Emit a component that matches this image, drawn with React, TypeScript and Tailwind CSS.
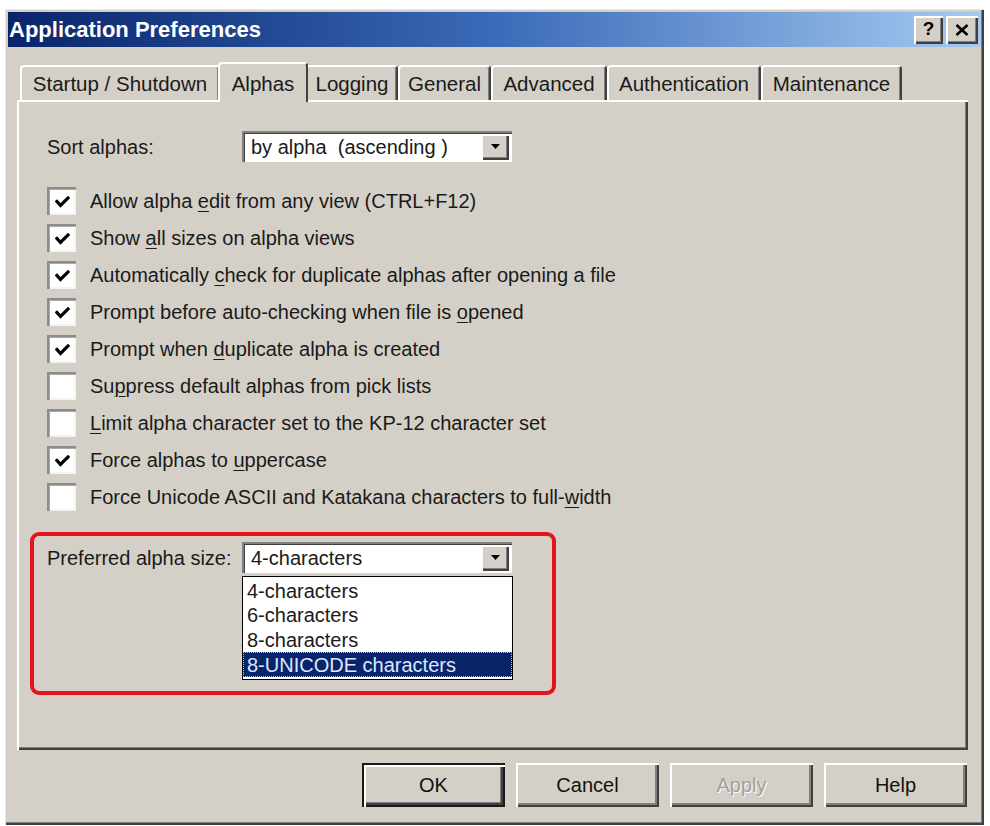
import React from "react";

const FONT = { fontFamily: '"Liberation Sans", Arial, sans-serif' };

function Check() {
  return (
    <svg width="15" height="12" viewBox="0 0 15 12">
      <path d="M2 5.5 L5.5 9.5 L13 2" stroke="#000" strokeWidth="3.2" fill="none" strokeLinecap="square" />
    </svg>
  );
}

function CheckBox({ checked }: { checked: boolean }) {
  return (
    <div className="w-[29px] h-[28px] bg-white shrink-0 flex items-center justify-center pl-[2px] pt-[2px] shadow-[inset_2px_2px_#8c8c8c,inset_3px_3px_#a8a8a8,inset_-2px_-2px_#f4f4f4]">
      {checked ? <Check /> : null}
    </div>
  );
}

function Row({ checked, children }: { checked: boolean; children: React.ReactNode }) {
  return (
    <div className="h-[37px] flex items-center gap-[14px]">
      <CheckBox checked={checked} />
      <span className="whitespace-nowrap">{children}</span>
    </div>
  );
}

function U({ children }: { children: React.ReactNode }) {
  return <span className="underline decoration-1 underline-offset-[3px]">{children}</span>;
}

function Arrow() {
  return (
    <svg width="9" height="5" viewBox="0 0 9 5">
      <path d="M0 0 H9 L4.5 5 Z" fill="#000" />
    </svg>
  );
}

function Combo({ text, width }: { text: string; width: string }) {
  return (
    <div className={`${width} h-[31px] bg-white flex items-center shadow-[inset_2px_2px_#808080,inset_3px_3px_#404040,inset_-2px_-2px_#fff] pl-[9px] pr-[3px]`}>
      <span className="flex-1 whitespace-pre">{text}</span>
      <div className="w-[28px] h-[26px] bg-[#d4d0c8] flex items-center justify-center shadow-[inset_2px_2px_#fff,inset_-2px_-2px_#404040,inset_-3px_-3px_#808080]">
        <Arrow />
      </div>
    </div>
  );
}

function Tab({ label, w, active }: { label: string; w: string; active?: boolean }) {
  if (active) {
    return (
      <div className={`${w} -mx-[2px] relative z-10 h-[40px] -mb-[2px] bg-[#d4d0c8] rounded-t-[4px] border-t-2 border-l-2 border-white border-r-2 border-r-[#404040] flex items-start justify-center pt-[5px]`}>
        {label}
      </div>
    );
  }
  return (
    <div className={`${w} h-[35px] bg-[#d4d0c8] rounded-t-[4px] border-t-2 border-l-2 border-white border-r-2 border-r-[#404040] shadow-[inset_-1px_0_#808080] flex items-center justify-center pt-[2px]`}>
      {label}
    </div>
  );
}

function Btn({ label, def, disabled }: { label: string; def?: boolean; disabled?: boolean }) {
  const base = def
    ? "shadow-[inset_2px_2px_#1a1a1a,inset_4px_4px_#fff,inset_-2px_-2px_#1a1a1a,inset_-4px_-4px_#404040,inset_-5px_-5px_#808080]"
    : "shadow-[inset_2px_2px_#fff,inset_-2px_-2px_#404040,inset_-4px_-4px_#808080]";
  return (
    <div
      className={`w-[143px] h-[44px] bg-[#d4d0c8] flex items-center justify-center ${base} ${
        disabled ? "text-[#a0a0a0] [text-shadow:1px_1px_0_#fff]" : "text-[#111]"
      }`}
    >
      {label}
    </div>
  );
}

export default function App() {
  return (
    <div className="w-[990px] h-[826px] bg-white pt-[9px] pl-[5px] text-[20px] text-[#1a1a1a]" style={FONT}>
      <div className="w-[979px] h-[816px] bg-[#d4d0c8] p-[3px] flex flex-col shadow-[inset_1px_1px_#e8e8e8,inset_-2px_-2px_#404040,inset_-3px_-3px_#808080]">
        {/* Title bar */}
        <div className="h-[35px] shrink-0 bg-linear-to-r from-[#0a246a] via-[#3a6ab8] to-[#a6caf0] flex items-center pl-[1px] pr-[3px]">
          <span className="text-white font-bold text-[22px] flex-1 leading-none">Application Preferences</span>
          <div className="flex gap-[3px]">
            <div className="w-[29px] h-[28px] bg-[#d4d0c8] flex items-center justify-center font-bold text-[19px] text-black shadow-[inset_2px_2px_#fff,inset_-2px_-2px_#404040,inset_-3px_-3px_#808080] pb-[1px]">
              ?
            </div>
            <div className="w-[32px] h-[28px] bg-[#d4d0c8] flex items-center justify-center shadow-[inset_2px_2px_#fff,inset_-2px_-2px_#404040,inset_-3px_-3px_#808080]">
              <svg width="14" height="12" viewBox="0 0 14 12">
                <path d="M1.5 1 L12.5 11 M12.5 1 L1.5 11" stroke="#000" strokeWidth="2.6" />
              </svg>
            </div>
          </div>
        </div>

        {/* Body */}
        <div className="flex flex-col pl-[9px] pr-[13px]">
          {/* Tabs */}
          <div className="mt-[15px] h-[38px] flex items-end pl-[3px] text-[20.5px]">
            <Tab label="Startup / Shutdown" w="w-[200px]" />
            <Tab label="Alphas" w="w-[90px]" active />
            <Tab label="Logging" w="w-[92px]" />
            <Tab label="General" w="w-[93px]" />
            <Tab label="Advanced" w="w-[116px]" />
            <Tab label="Authentication" w="w-[154px]" />
            <Tab label="Maintenance" w="w-[141px]" />
          </div>

          {/* Panel */}
          <div className="h-[650px] flex flex-col pl-[30px] pt-[31px] shadow-[inset_2px_2px_#fff,inset_-2px_-2px_#404040,inset_-3px_-3px_#808080]">
            <div className="h-[31px] flex items-center">
              <span className="w-[195px] shrink-0">Sort alphas:</span>
              <Combo text="by alpha  (ascending )" width="w-[270px]" />
            </div>

            <div className="mt-[20px] flex flex-col">
              <Row checked>
                Allow alpha <U>e</U>dit from any view (CTRL+F12)
              </Row>
              <Row checked>
                Show <U>a</U>ll sizes on alpha views
              </Row>
              <Row checked>
                Automatically <U>c</U>heck for duplicate alphas after opening a file
              </Row>
              <Row checked>
                Prompt before auto-checking when file is <U>o</U>pened
              </Row>
              <Row checked>
                Prompt when <U>d</U>uplicate alpha is created
              </Row>
              <Row checked={false}>
                Su<U>p</U>press default alphas from pick lists
              </Row>
              <Row checked={false}>
                <U>L</U>imit alpha character set to the KP-12 character set
              </Row>
              <Row checked>
                Force alphas to <U>u</U>ppercase
              </Row>
              <Row checked={false}>
                Force Unicode ASCII and Katakana characters to full-<U>w</U>idth
              </Row>
            </div>

            {/* Highlighted region */}
            <div className="mt-[17px] -ml-[17px] w-[526px] h-[163px] border-[4px] border-[#e5141c] rounded-[9px] flex pl-[13px] pt-[6px]">
              <span className="w-[195px] shrink-0 h-[31px] flex items-center">Preferred alpha size:</span>
              <div className="flex flex-col">
                <Combo text="4-characters" width="w-[270px]" />
                <div className="mt-[3px] w-[271px] h-[104px] bg-white border border-black flex flex-col pt-[1px] leading-none">
                  <div className="h-[25px] flex items-center pl-[4px]">4-characters</div>
                  <div className="h-[24px] flex items-center pl-[4px]">6-characters</div>
                  <div className="h-[25px] flex items-center pl-[4px]">8-characters</div>
                  <div className="h-[25px] flex items-center pl-[3px] bg-[#0a246a] text-[#dde6ff] border border-dotted border-[#c8c8a0]">
                    8-UNICODE characters
                  </div>
                </div>
              </div>
            </div>
          </div>

          {/* Buttons */}
          <div className="mt-[13px] flex justify-end gap-[11px] pr-[1px]">
            <Btn label="OK" def />
            <Btn label="Cancel" />
            <Btn label="Apply" disabled />
            <Btn label="Help" />
          </div>
        </div>
      </div>
    </div>
  );
}
